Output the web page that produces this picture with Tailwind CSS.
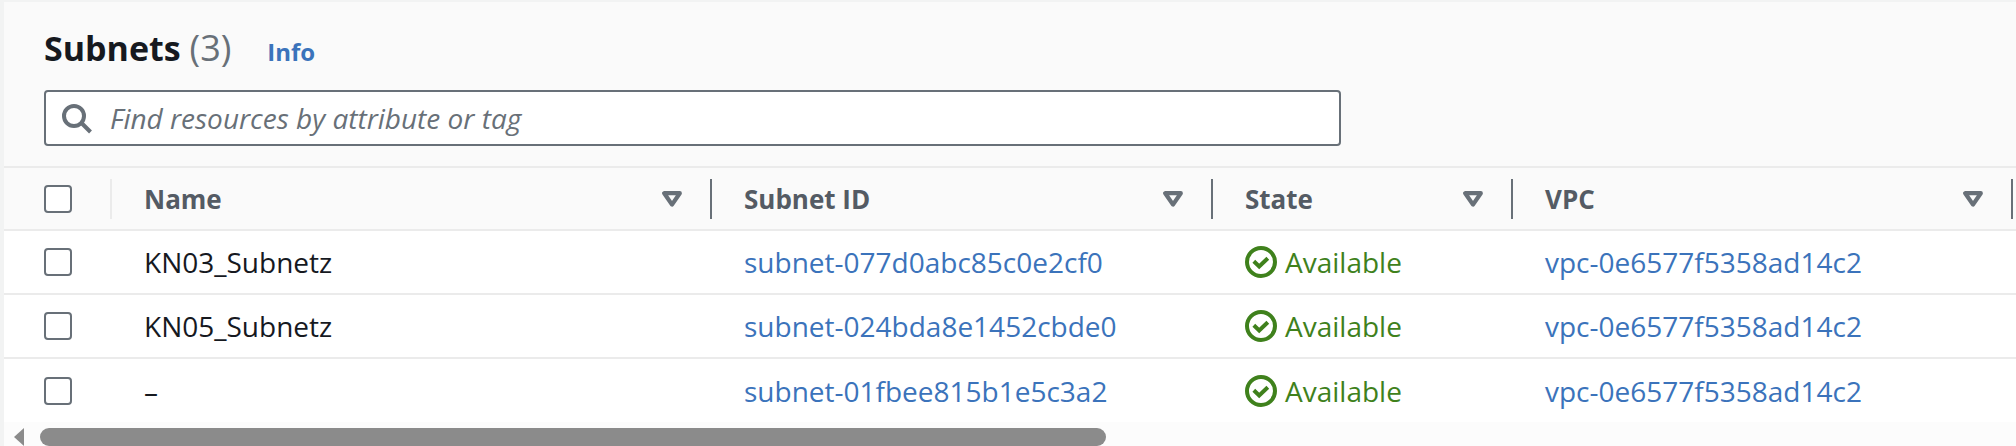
<!DOCTYPE html>
<html lang="en">
<head>
<meta charset="utf-8">
<title>Subnets</title>
<script src="https://cdn.jsdelivr.net/npm/@tailwindcss/browser@4"></script>
</head>
<body class="min-h-screen overflow-hidden bg-[#f2f3f3] pl-1 pt-0.5 font-['Open_Sans','Noto_Sans',sans-serif] text-[28px] leading-9 text-[#16191f]">
<svg class="hidden" aria-hidden="true">
  <symbol id="sort" viewBox="0 0 20 16"><path d="M2.2 2.2h15.6L10 13.6z" fill="none" stroke="currentColor" stroke-width="4.2" stroke-linejoin="round"/></symbol>
  <symbol id="ok" viewBox="0 0 32 32" fill="none" stroke="currentColor" stroke-width="4"><circle cx="16" cy="16" r="14"/><path d="M8.8 15.2l5.4 5.2 8.6-8.2"/></symbol>
</svg>
<main class="bg-[#fafafa]">
  <header class="border-b-2 border-[#ebebeb] pl-10 pt-[22px] pb-5">
    <div class="flex items-baseline">
      <h1 class="text-[34px] leading-12 font-bold">Subnets <span class="text-4xl leading-12 font-normal text-[#687078]">(3)</span></h1>
      <a href="#" class="ml-9 text-2xl font-bold text-[#3b73bb]">Info</a>
    </div>
    <label class="mt-[18px] flex h-14 w-[1297px] max-w-full items-center rounded-sm border-2 border-[#687078] bg-white pl-4">
      <svg class="size-8 shrink-0 text-[#687078]" viewBox="0 0 32 32" fill="none" stroke="currentColor" stroke-width="4"><circle cx="12" cy="14" r="10"/><path d="M19 20.5l9.5 9.5"/></svg>
      <input type="search" aria-label="Find resources" placeholder="Find resources by attribute or tag" class="ml-4 min-w-0 grow outline-none placeholder:italic placeholder:text-[#687078] placeholder:opacity-100">
    </label>
  </header>
  <table class="w-full table-fixed border-collapse text-left">
    <colgroup><col class="w-27"><col class="w-150"><col class="w-[501px]"><col class="w-75"><col class="w-125"><col></colgroup>
    <thead class="text-[26px] text-[#545b64]">
      <tr class="h-[62px] border-b-2 border-[#ebebeb]">
        <th class="p-0"><div class="flex h-10 items-center border-r-2 border-[#ebebeb] pl-10"><input type="checkbox" aria-label="Select all" class="size-7 appearance-none rounded-sm border-2 border-[#687078] bg-white"></div></th>
        <th class="p-0 font-bold"><div class="flex h-10 items-center justify-between border-r-2 border-[#687078] pl-8 pr-7">Name<button aria-label="Sort by name" class="text-[#687078]"><svg class="h-4 w-5"><use href="#sort"/></svg></button></div></th>
        <th class="p-0 font-bold"><div class="flex h-10 items-center justify-between border-r-2 border-[#687078] pl-8 pr-7">Subnet ID<button aria-label="Sort by subnet ID" class="text-[#687078]"><svg class="h-4 w-5"><use href="#sort"/></svg></button></div></th>
        <th class="p-0 font-bold"><div class="flex h-10 items-center justify-between border-r-2 border-[#687078] pl-8 pr-7">State<button aria-label="Sort by state" class="text-[#687078]"><svg class="h-4 w-5"><use href="#sort"/></svg></button></div></th>
        <th class="p-0 font-bold"><div class="flex h-10 items-center justify-between border-r-2 border-[#687078] pl-8 pr-7">VPC<button aria-label="Sort by VPC" class="text-[#687078]"><svg class="h-4 w-5"><use href="#sort"/></svg></button></div></th>
        <th class="p-0"></th>
      </tr>
    </thead>
    <tbody class="bg-white">
      <tr class="h-16 border-b-2 border-[#ebebeb]">
        <td class="p-0 pl-10"><input type="checkbox" aria-label="Select KN03_Subnetz" class="block size-7 appearance-none rounded-sm border-2 border-[#687078] bg-white"></td>
        <td class="p-0 pl-8">KN03_Subnetz</td>
        <td class="p-0 pl-8"><a href="#" class="text-[#3b73bb]">subnet-077d0abc85c0e2cf0</a></td>
        <td class="p-0 pl-8"><div class="flex items-center gap-2 text-[#3f811c]"><svg class="size-8"><use href="#ok"/></svg>Available</div></td>
        <td class="p-0 pl-8"><a href="#" class="text-[#3b73bb]">vpc-0e6577f5358ad14c2</a></td>
        <td></td>
      </tr>
      <tr class="h-16 border-b-2 border-[#ebebeb]">
        <td class="p-0 pl-10"><input type="checkbox" aria-label="Select KN05_Subnetz" class="block size-7 appearance-none rounded-sm border-2 border-[#687078] bg-white"></td>
        <td class="p-0 pl-8">KN05_Subnetz</td>
        <td class="p-0 pl-8"><a href="#" class="text-[#3b73bb]">subnet-024bda8e1452cbde0</a></td>
        <td class="p-0 pl-8"><div class="flex items-center gap-2 text-[#3f811c]"><svg class="size-8"><use href="#ok"/></svg>Available</div></td>
        <td class="p-0 pl-8"><a href="#" class="text-[#3b73bb]">vpc-0e6577f5358ad14c2</a></td>
        <td></td>
      </tr>
      <tr class="h-16">
        <td class="p-0 pl-10"><input type="checkbox" aria-label="Select subnet-01fbee815b1e5c3a2" class="block size-7 appearance-none rounded-sm border-2 border-[#687078] bg-white"></td>
        <td class="p-0 pl-8">–</td>
        <td class="p-0 pl-8"><a href="#" class="text-[#3b73bb]">subnet-01fbee815b1e5c3a2</a></td>
        <td class="p-0 pl-8"><div class="flex items-center gap-2 text-[#3f811c]"><svg class="size-8"><use href="#ok"/></svg>Available</div></td>
        <td class="p-0 pl-8"><a href="#" class="text-[#3b73bb]">vpc-0e6577f5358ad14c2</a></td>
        <td></td>
      </tr>
    </tbody>
  </table>
  <div class="flex items-start bg-[#fcfcfc] pl-2.5 pt-1.5 pb-1.5">
    <button aria-label="Scroll left" class="text-[#8b8b8b]"><svg class="h-[18px] w-2.5" viewBox="0 0 10 18" fill="currentColor"><path d="M10 0v18L0 9z"/></svg></button>
    <div class="ml-4 h-[18px] w-[1066px] rounded-full bg-[#8b8b8b]"></div>
  </div>
</main>
</body>
</html>
